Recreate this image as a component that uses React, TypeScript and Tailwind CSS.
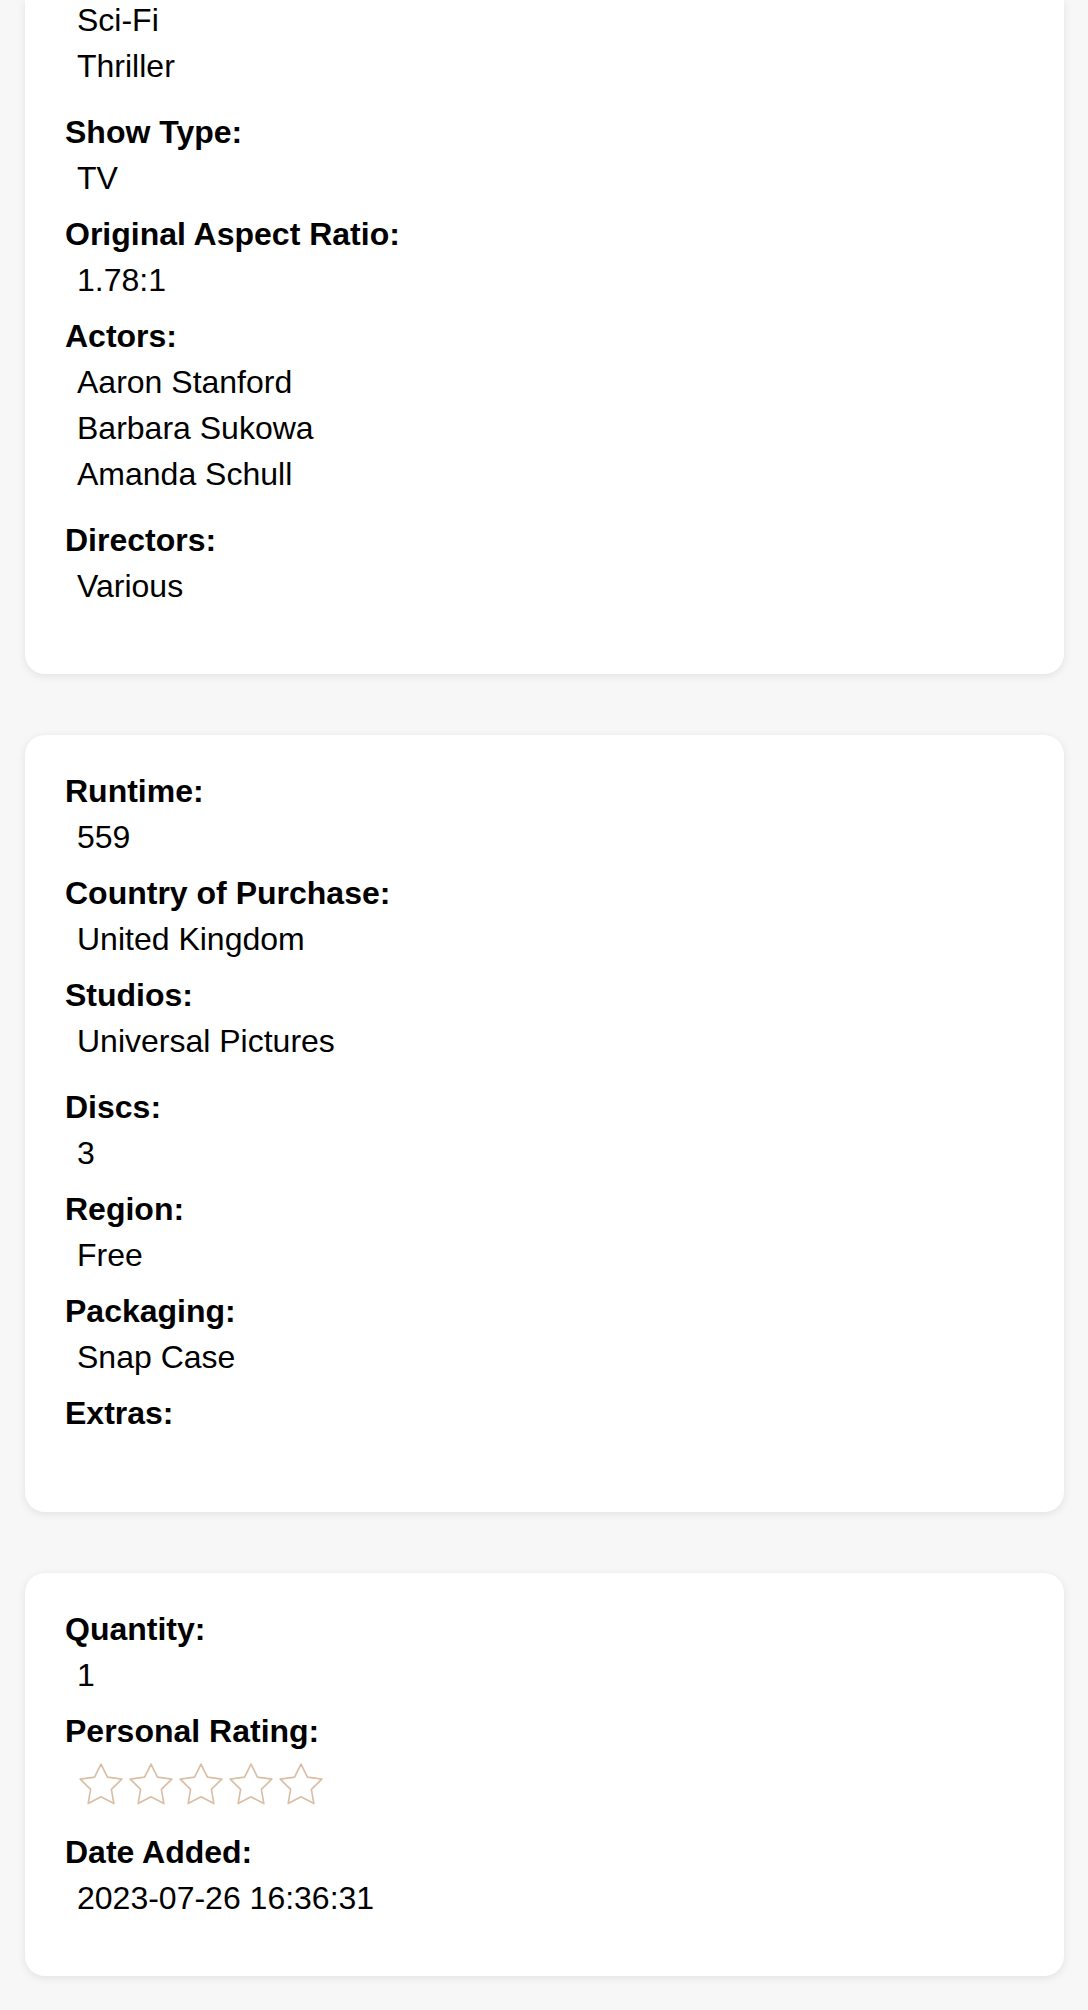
import React from "react";

type Field = {
  label: string;
  value?: string;
  list?: string[];
};

const Star = () => (
  <svg width="44" height="42" viewBox="1.5 1.5 21 20.2" fill="none">
    <polygon
      points="12,2 15.09,8.26 22,9.27 17,14.14 18.18,21.02 12,17.77 5.82,21.02 7,14.14 2,9.27 8.91,8.26"
      stroke="#d8bfa6"
      strokeWidth="0.8"
      strokeLinejoin="round"
    />
  </svg>
);

const Label = ({ children }: { children: React.ReactNode }) => (
  <div className="font-bold leading-[46px]">{children}</div>
);

const FieldRow = ({ field }: { field: Field }) => {
  if (field.list) {
    return (
      <div className="mb-[10px]">
        <Label>{field.label}</Label>
        <ul className={`pl-[12px] ${field.list.length === 0 ? "pb-[21px]" : "pb-[10px]"}`}>
          {field.list.map((item) => (
            <li key={item} className="leading-[46px]">
              {item}
            </li>
          ))}
        </ul>
      </div>
    );
  }
  return (
    <div className="mb-[10px]">
      <Label>{field.label}</Label>
      <div className="pl-[12px] leading-[46px]">{field.value}</div>
    </div>
  );
};

const Card = ({
  children,
  first,
}: {
  children: React.ReactNode;
  first?: boolean;
}) => (
  <section
    className={`bg-white ml-[25px] mr-[24px] px-[40px] pb-[45px] shadow-[0_2px_8px_rgba(0,0,0,0.09)] ${
      first ? "rounded-b-[20px] pt-0" : "rounded-[20px] pt-[33px]"
    }`}
  >
    {children}
  </section>
);

const details: Field[] = [
  { label: "Show Type:", value: "TV" },
  { label: "Original Aspect Ratio:", value: "1.78:1" },
  { label: "Actors:", list: ["Aaron Stanford", "Barbara Sukowa", "Amanda Schull"] },
  { label: "Directors:", list: ["Various"] },
];

const disc: Field[] = [
  { label: "Runtime:", value: "559" },
  { label: "Country of Purchase:", value: "United Kingdom" },
  { label: "Studios:", list: ["Universal Pictures"] },
  { label: "Discs:", value: "3" },
  { label: "Region:", value: "Free" },
  { label: "Packaging:", value: "Snap Case" },
  { label: "Extras:", list: [] },
];

export default function App() {
  return (
    <div
      className="min-h-screen bg-[#f7f7f7] pb-[32px] text-black text-[32px]"
      style={{ fontFamily: '"Liberation Sans", Arial, sans-serif' }}
    >
      <div className="flex flex-col gap-[61px]">
        <Card first>
          <ul className="pl-[12px] mb-[20px] -mt-[3px]">
            <li className="leading-[46px]">Sci-Fi</li>
            <li className="leading-[46px]">Thriller</li>
          </ul>
          {details.map((f) => (
            <FieldRow key={f.label} field={f} />
          ))}
        </Card>

        <Card>
          {disc.map((f) => (
            <FieldRow key={f.label} field={f} />
          ))}
        </Card>

        <Card>
          <FieldRow field={{ label: "Quantity:", value: "1" }} />
          <div className="mb-[10px]">
            <Label>Personal Rating:</Label>
            <div className="pl-[14px] pt-[9px] h-[65px] flex gap-[6px]">
              {[0, 1, 2, 3, 4].map((i) => (
                <Star key={i} />
              ))}
            </div>
          </div>
          <FieldRow field={{ label: "Date Added:", value: "2023-07-26 16:36:31" }} />
        </Card>
      </div>
    </div>
  );
}
